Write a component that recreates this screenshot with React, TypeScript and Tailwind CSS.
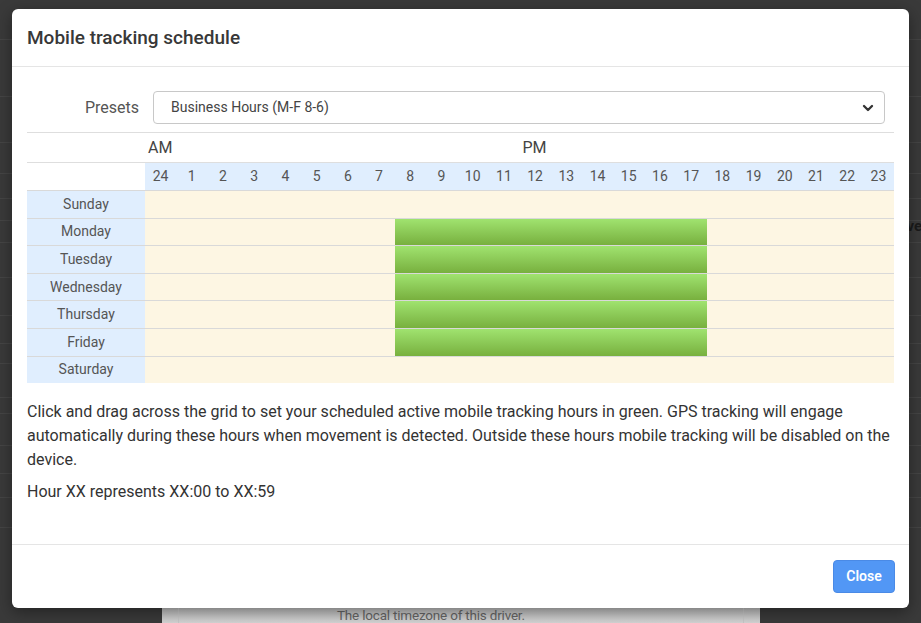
import { ChevronDown } from 'lucide-react';

const days = ['Sunday', 'Monday', 'Tuesday', 'Wednesday', 'Thursday', 'Friday', 'Saturday'];
const hours = [24, 1, 2, 3, 4, 5, 6, 7, 8, 9, 10, 11, 12, 13, 14, 15, 16, 17, 18, 19, 20, 21, 22, 23];

// business hours preset: Mon-Fri, 8 through 17
const isActive = (day: number, hour: number) => day >= 1 && day <= 5 && hour >= 8 && hour <= 17;

const bgRows = [40, 57, 46, 31, 25, 22, 22, 35, 38, 28, 20, 34, 16, 32, 28, 24, 30];

function Backdrop() {
  return (
    <div className="flex flex-col">
      {bgRows.map((h, i) => (
        <div key={i} className="border-b border-[#454545]" style={{ height: h }}>
          {i === 6 && (
            <div className="flex justify-end">
              <span className="text-[15px] font-bold text-[#1a1a1a] leading-[18px] -mt-[4px] -mr-[1px]">ve</span>
            </div>
          )}
        </div>
      ))}
    </div>
  );
}

function ScheduleGrid() {
  return (
    <div className="flex flex-col text-[14px] text-[#555]">
      {/* AM / PM */}
      <div className="flex h-[30px] border-t border-[#dedede] items-center">
        <div className="w-[118px]" />
        <div className="flex-1 grid grid-cols-24 text-[16px] text-[#444]">
          <span className="col-span-12 pl-[3px]">AM</span>
          <span className="col-span-12 pl-[3px]">PM</span>
        </div>
      </div>
      {/* hours */}
      <div className="flex h-[28px] border-t border-[#dedede]">
        <div className="w-[118px]" />
        <div className="flex-1 grid grid-cols-24 bg-[#e0eefe]">
          {hours.map((h) => (
            <div key={h} className="flex items-center justify-center">
              {h}
            </div>
          ))}
        </div>
      </div>
      {days.map((d, di) => (
        <div key={d} className="flex h-[27.6px] border-t border-[#d9d9d9]">
          <div className="w-[118px] bg-[#e0eefe] flex items-center justify-center">{d}</div>
          <div className="flex-1 grid grid-cols-24 bg-[#fdf6e3]">
            {hours.map((h) => (
              <div
                key={h}
                className={isActive(di, h) ? 'bg-linear-to-b from-[#a0e36f] to-[#78b03e]' : ''}
              />
            ))}
          </div>
        </div>
      ))}
    </div>
  );
}

export default function App() {
  return (
    <div
      className="relative h-[623px] w-[921px] overflow-hidden bg-[#3a3a3a]"
      style={{ fontFamily: 'Roboto, "Liberation Sans", sans-serif' }}
    >
      <Backdrop />

      {/* page panel peeking below the modal */}
      <div className="absolute left-[162px] top-[608px] w-[598px] h-[15px] bg-linear-to-b from-[#bdbdbd] to-[#d6d6d6] px-[16px]">
        <div className="h-full border-x border-[#c9c9c9] flex items-start justify-start pl-[158px]">
          <span className="text-[13.5px] leading-[14px] text-[#666] tracking-[-0.2px]">The local timezone of this driver.</span>
        </div>
      </div>

      {/* modal */}
      <div className="absolute left-[12px] top-[9px] w-[897px] bg-white rounded-[6px] shadow-[0_4px_16px_rgba(0,0,0,0.4)] flex flex-col">
        <div className="px-[15px] py-[15px] border-b border-[#e5e5e5]">
          <h2 className="text-[19px] leading-[27px] font-medium text-[#383838]">Mobile tracking schedule</h2>
        </div>

        <div className="px-[15px] pt-[24px] pb-[40px] text-[#333]">
          <div className="flex items-center">
            <label className="w-[112px] text-right text-[16px] text-[#555]">Presets</label>
            <div className="ml-[14px] mr-[9px] flex-1 h-[33px] border border-[#c8c8c8] rounded-[4px] flex items-center justify-between pl-[17px] pr-[8px]">
              <span className="text-[14px] text-[#444]">Business Hours (M-F 8-6)</span>
              <ChevronDown className="w-[16px] h-[16px] text-[#333]" strokeWidth={3.5} />
            </div>
          </div>

          <div className="mt-[8px]">
            <ScheduleGrid />
          </div>

          <p className="mt-[17px] text-[16px] leading-[24px]">
            Click and drag across the grid to set your scheduled active mobile tracking hours in green. GPS tracking will
            engage automatically during these hours when movement is detected. Outside these hours mobile tracking will be
            disabled on the device.
          </p>
          <p className="mt-[8px] text-[16px] leading-[24px]">Hour XX represents XX:00 to XX:59</p>
        </div>

        <div className="border-t border-[#e5e5e5] h-[64px] flex items-center justify-end px-[14px]">
          <button className="h-[33px] w-[62px] rounded-[4px] bg-[#5297f5] border border-[#4a8ae6] text-white text-[14px] font-semibold">
            Close
          </button>
        </div>
      </div>
    </div>
  );
}
